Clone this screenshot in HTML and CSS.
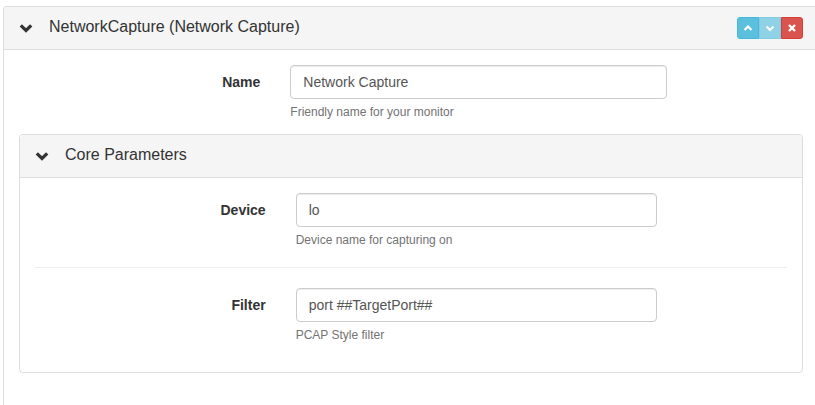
FILE: index.html
```html
<!DOCTYPE html>
<html>
<head>
<meta charset="utf-8">
<link rel="stylesheet" href="styles.css">
</head>
<body>
<div class="panel outer">
  <div class="panel-heading">
    <svg class="chev" width="14" height="14" viewBox="0 0 14 14"><path d="M1.8 4.3 L7 9.5 L12.2 4.3" fill="none" stroke="#333" stroke-width="3.2"/></svg>
    <span class="title">NetworkCapture (Network Capture)</span>
    <div class="btn-group">
      <span class="btn btn-info"><svg width="10" height="10" viewBox="0 0 10 10"><path d="M1.5 7 L5 3.5 L8.5 7" fill="none" stroke="#fff" stroke-width="2.2"/></svg></span>
      <span class="btn btn-info disabled"><svg width="10" height="10" viewBox="0 0 10 10"><path d="M1.5 3.5 L5 7 L8.5 3.5" fill="none" stroke="#fff" stroke-width="2.2"/></svg></span>
      <span class="btn btn-danger"><svg width="10" height="10" viewBox="0 0 10 10"><path d="M2 2 L8 8 M8 2 L2 8" fill="none" stroke="#fff" stroke-width="2.4"/></svg></span>
    </div>
  </div>
  <div class="panel-body outer-body">
    <div class="form-row">
      <label class="ctl-label">Name</label>
      <div class="field">
        <input class="form-control" type="text" value="Network Capture">
        <div class="help">Friendly name for your monitor</div>
      </div>
    </div>
    <div class="panel inner">
      <div class="panel-heading">
        <svg class="chev" width="14" height="14" viewBox="0 0 14 14"><path d="M1.8 4.3 L7 9.5 L12.2 4.3" fill="none" stroke="#333" stroke-width="3.2"/></svg>
        <span class="title">Core Parameters</span>
      </div>
      <div class="panel-body">
        <div class="form-row">
          <label class="ctl-label">Device</label>
          <div class="field">
            <input class="form-control" type="text" value="lo">
            <div class="help">Device name for capturing on</div>
          </div>
        </div>
        <hr class="sep">
        <div class="form-row">
          <label class="ctl-label">Filter</label>
          <div class="field">
            <input class="form-control" type="text" value="port ##TargetPort##">
            <div class="help">PCAP Style filter</div>
          </div>
        </div>
      </div>
    </div>
  </div>
</div>
</body>
</html>
```

FILE: styles.css
```css
* { box-sizing: border-box; }
html, body { margin: 0; padding: 0; background: #fff; }
html { height: 405px; overflow: hidden; }
body {
  font-family: "Liberation Sans", Arial, sans-serif;
  font-size: 14px;
  line-height: 1.42857;
  color: #333;
  padding: 6px 0 0 3px;
  width: 815px;
  overflow: hidden;
}
.panel {
  background: #fff;
  border: 1px solid #ddd;
  border-radius: 4px;
}
.outer { width: 816px; border-bottom: none; border-radius: 4px 4px 0 0; }
.panel-heading {
  display: flex;
  align-items: center;
  height: 43px;
  padding: 0 15px;
  background: #f5f5f5;
  border-bottom: 1px solid #ddd;
  border-radius: 3px 3px 0 0;
}
.chev { display: block; margin-right: 16px; flex: none; }
.title { font-size: 16px; color: #333; flex: 1; position: relative; top: -1px; }
.btn-group { display: flex; }
.btn {
  display: flex;
  align-items: center;
  justify-content: center;
  width: 22px;
  height: 22px;
  border: 1px solid transparent;
}
.btn-info { background: #5bc0de; border-color: #46b8da; }
.btn-info:first-child { border-radius: 3px 0 0 3px; }
.btn-info.disabled { opacity: .65; }
.btn-danger { background: #d9534f; border-color: #d43f3a; border-radius: 0 3px 3px 0; }
.panel-body { padding: 15px; }
.outer-body { padding-bottom: 50px; }
.form-row {
  display: grid;
  grid-template-columns: 33.3333% 50%;
  margin: 0 -15px;
}
.ctl-label {
  padding: 0 15px;
  text-align: right;
  font-weight: bold;
  line-height: 34px;
}
.field { padding: 0 15px; }
.form-control {
  display: block;
  width: 100%;
  height: 34px;
  margin: 0;
  padding: 6px 12px;
  font-family: inherit;
  font-size: 14px;
  line-height: 1.42857;
  color: #555;
  background: #fff;
  border: 1px solid #ccc;
  border-radius: 4px;
  box-shadow: inset 0 1px 1px rgba(0,0,0,.075);
}
.help {
  margin: 5px 0 13px;
  font-size: 12px;
  line-height: 17px;
  color: #737373;
}
.sep {
  margin: 5px 0 20px;
  border: 0;
  border-top: 1px solid #eee;
}
```
